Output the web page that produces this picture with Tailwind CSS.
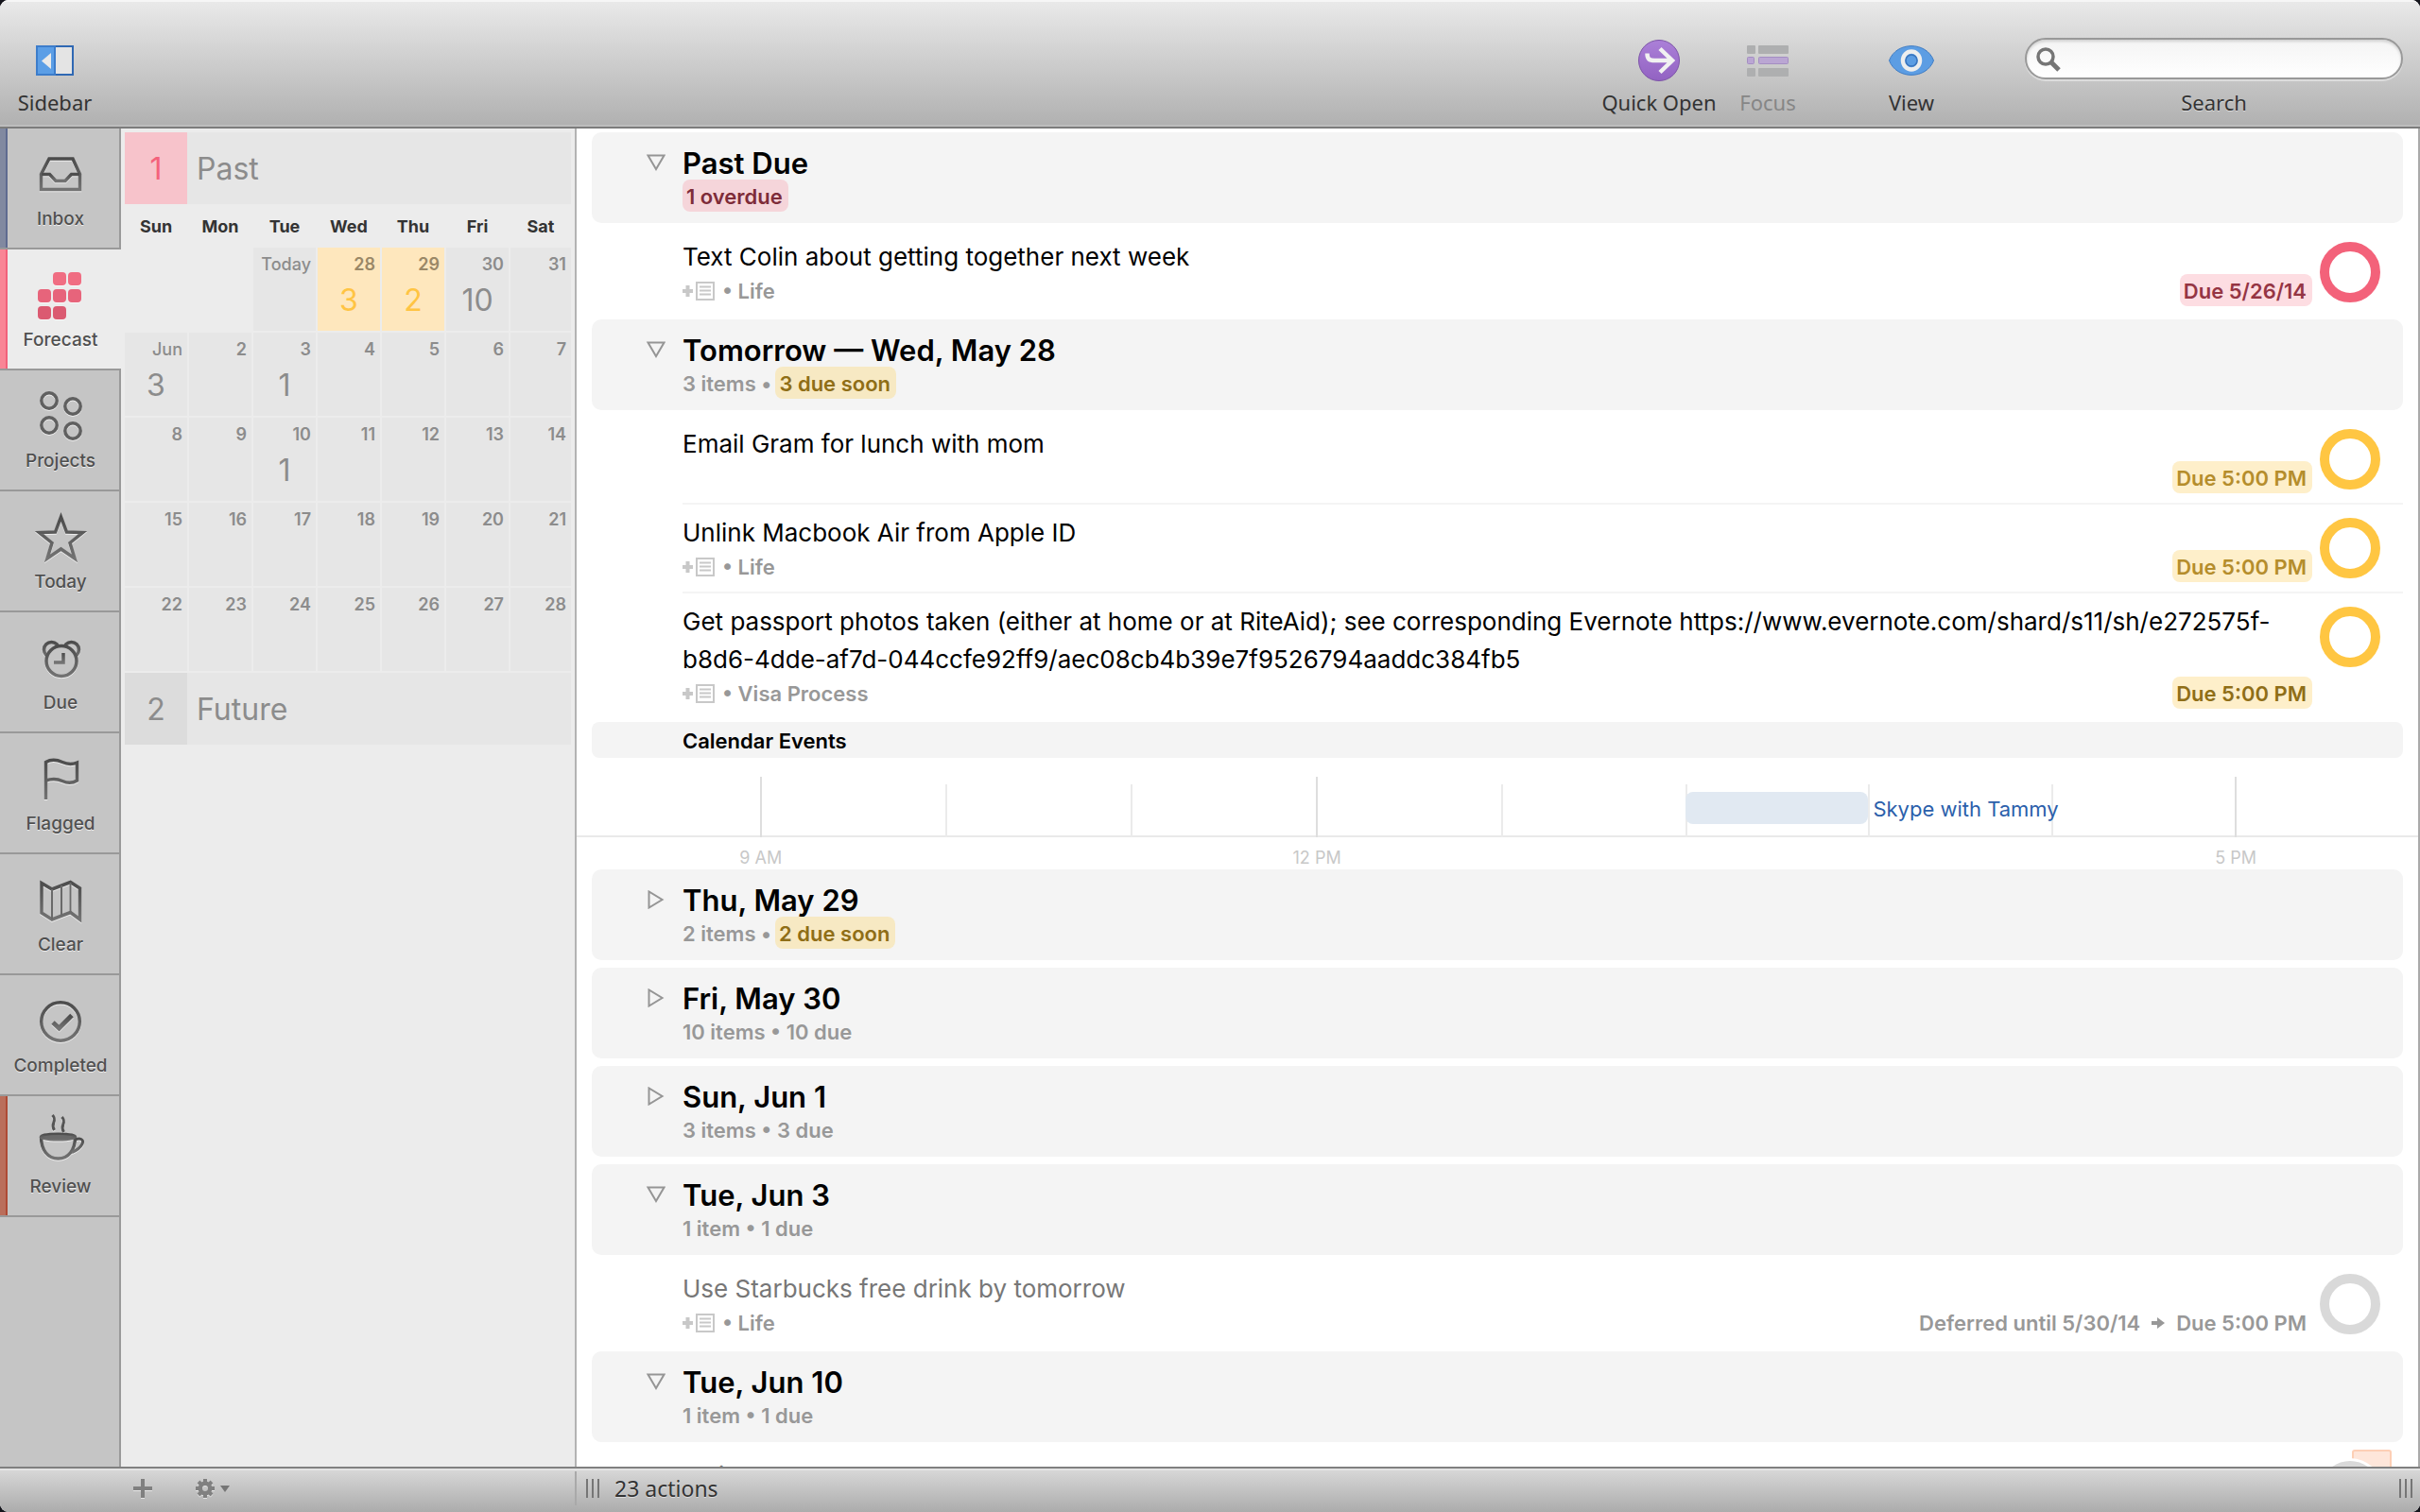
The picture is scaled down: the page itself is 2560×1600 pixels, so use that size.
<!DOCTYPE html>
<html lang="en">
<head>
<meta charset="utf-8">
<title>Forecast</title>
<script src="https://cdn.jsdelivr.net/npm/@tailwindcss/browser@4"></script>
</head>
<body class="bg-[#15151c] font-['Inter','Noto_Sans',sans-serif] text-black">
<svg class="absolute size-0" aria-hidden="true">
  <symbol id="note" viewBox="0 0 34 20"><path d="M0 10h11M5.500 4v12" stroke="#c8c8c8" stroke-width="4" fill="none"/><path d="M15 1h18v18H15z" stroke="#c8c8c8" stroke-width="2" fill="none"/><path d="M18 5.500h12M18 9.500h12M18 13.500h12" stroke="#c8c8c8" stroke-width="2"/></symbol>
  <symbol id="open" viewBox="0 0 22 20"><path d="M3.500 2.500h17L12 17z" stroke="#959595" stroke-width="2" fill="none"/></symbol>
  <symbol id="closed" viewBox="0 0 22 20"><path d="M4.500 1.500v17l14-8.500z" stroke="#959595" stroke-width="2" fill="none"/></symbol>
  <linearGradient id="ink" x1="0" y1="0" x2="0" y2="1"><stop offset="0" stop-color="#4c4c4c"/><stop offset="1" stop-color="#737373"/></linearGradient>
</svg>

<div class="flex h-screen flex-col overflow-hidden rounded-[9px] bg-white">
  <header class="flex h-[136px] shrink-0 border-b-2 border-[#7c7c7c] bg-linear-to-b from-[#eaeaea] to-[#b0b0b0] px-[18px] pt-[38px] font-['Noto_Sans','Open_Sans',sans-serif] text-[22px] leading-8 text-[#333] shadow-[inset_0_2px_0_#f6f6f6,inset_0_-2px_0_#bdbdbd] [text-shadow:0_1px_0_rgba(255,255,255,0.5)]">
    <button type="button" class="flex w-20 flex-col items-center">
      <span class="flex h-[52px] items-center"><svg width="40" height="32" viewBox="0 0 40 32"><path d="M1 1h38v30H1z" fill="#e4e4e4" stroke="#2f68b3" stroke-width="2"/><path d="M1 1h19v30H1z" fill="#5b9ee6" stroke="#3d7dcb" stroke-width="2"/><path d="M16 8v17L6 16.500z" fill="#e9e9e9"/></svg></span>
      <span class="mt-[2px] whitespace-nowrap">Sidebar</span>
    </button>
    <div class="ml-auto flex">
      <button type="button" class="flex w-[126px] flex-col items-center">
        <span class="flex h-[52px] items-center"><svg width="44" height="44" viewBox="0 0 44 44"><defs><linearGradient id="qo" x1="0" y1="0" x2="0" y2="1"><stop offset="0" stop-color="#ab80d8"/><stop offset="1" stop-color="#9262c2"/></linearGradient></defs><circle cx="22" cy="22" r="21.500" fill="url(#qo)" stroke="#7d55a8"/><path d="M9.500 14.500c0 6 2 7.500 8 7.500H36M23 9.500L36 22 23 34.500" fill="none" stroke="#f1f1f1" stroke-width="4.500"/></svg></span>
        <span class="mt-[2px] whitespace-nowrap">Quick Open</span>
      </button>
      <button type="button" disabled class="ml-[22px] flex w-[60px] flex-col items-center text-[#868686]">
        <span class="flex h-[52px] items-center"><svg width="46" height="34" viewBox="0 0 46 34"><g fill="#aeafb0"><rect x="1" y="1" width="9" height="9" rx="1"/><rect x="13" y="1" width="32" height="9" rx="1"/><rect x="1" y="25" width="9" height="9" rx="1"/><rect x="13" y="25" width="32" height="9" rx="1"/></g><g fill="#baa6d3" stroke="#a48ec2"><rect x="1.500" y="13.500" width="7" height="7" rx="1"/><rect x="13.500" y="13.500" width="31" height="7" rx="1"/></g></svg></span>
        <span class="mt-[2px] whitespace-nowrap">Focus</span>
      </button>
      <button type="button" class="ml-24 flex w-[52px] flex-col items-center">
        <span class="flex h-[52px] items-center"><svg width="48" height="32" viewBox="0 0 48 32"><path d="M.5 16C8-4.500 40-4.500 47.500 16 40 36.500 8 36.500.5 16z" fill="#5c9de3" stroke="#3f7cc4"/><ellipse cx="24" cy="16" rx="9" ry="9.500" fill="#5c9de3" stroke="#eee" stroke-width="4.500"/><circle cx="24" cy="16" r="6" fill="none" stroke="#3b75bd" stroke-width="1.500"/></svg></span>
        <span class="mt-[2px] whitespace-nowrap">View</span>
      </button>
      <div class="relative ml-[94px] flex w-[400px] flex-col items-center">
        <div class="flex h-[52px] w-full items-start pt-[2px]">
          <input id="search" type="search" class="h-11 w-full rounded-full border-2 border-[#999] bg-linear-to-b from-[#f4f4f4] to-white pl-12 pr-5 shadow-[inset_0_2px_3px_rgba(0,0,0,0.15),0_2px_0_rgba(255,255,255,0.4)] outline-none">
        </div>
        <svg class="pointer-events-none absolute left-3 top-3" width="27" height="27" viewBox="0 0 27 27"><circle cx="10" cy="10" r="8" fill="none" stroke="#757575" stroke-width="3.500"/><path d="M15.500 15.500l8.500 8.500" stroke="#757575" stroke-width="5"/></svg>
        <label for="search" class="mt-[2px]">Search</label>
      </div>
    </div>
  </header>

  <div class="flex min-h-0 flex-1">
    <nav class="flex w-32 shrink-0 flex-col border-r-2 border-[#999] bg-[#c5c5c5] text-[19px] font-medium leading-6 text-[#505050] [&>button]:flex [&>button]:h-32 [&>button]:w-32 [&>button]:shrink-0 [&>button]:flex-col [&>button]:items-center [&>button]:border-b-2 [&>button]:border-[#999] [&>button]:pt-[22px] [&>button]:[text-shadow:0_1px_0_rgba(255,255,255,0.7)] [&_span]:mt-[6px] [&_svg]:shrink-0 [&_svg]:overflow-visible [&_svg]:drop-shadow-[0_1px_0_rgba(255,255,255,0.7)]">
      <button type="button" class="border-r-2 pl-[2px] shadow-[inset_6px_0_0_#8189a0,inset_8px_0_0_#5f6b90]">
        <svg width="56" height="56" viewBox="0 0 56 56" fill="none" stroke="url(#ink)" stroke-width="3.500"><path d="M16 10h25l7.500 16.500v16h-41v-16z"/><path d="M8 26.500h8.500l6.500 7h10l6.500-7H48"/></svg>
        <span>Inbox</span>
      </button>
      <button type="button" aria-current="page" class="bg-[#ececec] shadow-[inset_6px_0_0_#f98595,inset_8px_0_0_#f1617a]">
        <svg width="56" height="56" viewBox="0 0 56 56"><g fill="#f06d82"><rect x="20" y="2" width="14" height="14" rx="4"/><rect x="36" y="2" width="14" height="14" rx="4"/></g><g fill="#e7647b"><rect x="4" y="20" width="14" height="14" rx="4"/><rect x="20" y="20" width="14" height="14" rx="4"/><rect x="36" y="20" width="14" height="14" rx="4"/></g><g fill="#db5a71"><rect x="4" y="38" width="14" height="14" rx="4"/><rect x="20" y="38" width="14" height="14" rx="4"/></g></svg>
        <span>Forecast</span>
      </button>
      <button type="button" class="border-r-2 pl-[2px]">
        <svg width="56" height="56" viewBox="0 0 56 56" fill="none" stroke="#606060" stroke-width="3.500"><circle cx="16" cy="10" r="8.200"/><circle cx="41" cy="16" r="8.200"/><circle cx="16" cy="36" r="8.200"/><circle cx="41" cy="42" r="8.200"/></svg>
        <span>Projects</span>
      </button>
      <button type="button" class="border-r-2 pl-[2px]">
        <svg width="56" height="56" viewBox="0 0 56 56" fill="none" stroke="url(#ink)" stroke-width="3.500"><path d="M28.500 5l6 16 17 .5-13.500 11 5 16.500-14.500-10L14 49l5-16.500L5.500 21.500l17-.5z"/></svg>
        <span>Today</span>
      </button>
      <button type="button" class="border-r-2 pl-[2px]">
        <svg width="56" height="56" viewBox="0 0 56 56" fill="#c5c5c5" stroke="url(#ink)" stroke-width="3.500"><circle cx="18.500" cy="17.500" r="8"/><circle cx="39.500" cy="17.500" r="8"/><circle cx="29" cy="29.500" r="16"/><path d="M31 21v10H21" fill="none"/></svg>
        <span>Due</span>
      </button>
      <button type="button" class="border-r-2 pl-[2px]">
        <svg width="56" height="56" viewBox="0 0 56 56" fill="none" stroke="url(#ink)" stroke-width="3.500"><path d="M12.500 48V8.500c7-4 13-2 17.500 0s10.500 2.500 15.500.5v19c-5 3-11 2.500-15.500.5s-10-3-17.500-.5"/></svg>
        <span>Flagged</span>
      </button>
      <button type="button" class="border-r-2 pl-[2px]">
        <svg width="56" height="56" viewBox="0 0 56 56" fill="none" stroke="url(#ink)" stroke-width="3.500"><path d="M8 8.500l11 6.500 19.500-7.500L48.500 14v33l-10-7.500L19 47 8 40z"/><path d="M19 15v32M29 11v32M38.500 8v31" stroke="#6a6a6a" stroke-width="2"/></svg>
        <span>Clear</span>
      </button>
      <button type="button" class="border-r-2 pl-[2px]">
        <svg width="56" height="56" viewBox="0 0 56 56" fill="none" stroke="url(#ink)" stroke-width="3.500"><circle cx="28" cy="27" r="20.300"/><path d="M20 28l6.500 6L40 20.500" stroke-width="5"/></svg>
        <span>Completed</span>
      </button>
      <button type="button" class="border-r-2 pl-[2px] shadow-[inset_6px_0_0_#ba6e5b,inset_8px_0_0_#ae4a35]">
        <svg width="56" height="56" viewBox="0 0 56 56" fill="none" stroke="url(#ink)" stroke-width="3.500"><path d="M7.500 21c0 14 7 23 18 23s18-9 18-23"/><ellipse cx="25.500" cy="21" rx="18.500" ry="3.200" fill="#696969" stroke-width="2.500"/><path d="M43 24.500c5-3 10.500-1 8 4s-6 7-11 9" stroke-width="3"/><path d="M19.500-2c6 7-3 8 2 16M29.500 0c6 7-3 8 2 16" stroke="#555" stroke-width="3"/></svg>
        <span>Review</span>
      </button>
    </nav>

    <aside class="flex w-[482px] shrink-0 flex-col border-r-2 border-[#b3b3b3] bg-[#ececec] pl-[2px] pr-[2px] pt-1 text-[#8c8c8c]">
      <a href="#past" class="mx-[2px] flex h-[76px] bg-[#e6e6e6] text-[32px] leading-[78px]">
        <span class="w-[66px] bg-[#f7c3cb] text-center text-[#f4627b]">1</span><span class="pl-[10px]">Past</span>
      </a>
      <table class="w-full table-fixed border-separate border-spacing-[2px] text-[18px] font-semibold [&_i]:block [&_i]:text-center [&_i]:text-[32px] [&_i]:font-normal [&_i]:not-italic [&_i]:leading-10 [&_td]:h-[88px] [&_td]:bg-[#e6e6e6] [&_td]:p-0 [&_td]:align-top [&_td]:leading-9 [&_time]:block [&_time]:pr-[5px] [&_time]:text-right">
        <colgroup><col span="6" class="w-[66px]"><col></colgroup>
        <thead><tr class="h-[42px] text-[#333]"><th>Sun</th><th>Mon</th><th>Tue</th><th>Wed</th><th>Thu</th><th>Fri</th><th>Sat</th></tr></thead>
        <tbody>
          <tr><td class="bg-transparent!"></td><td class="bg-transparent!"></td><td><time class="font-medium">Today</time></td><td class="bg-[#fee7bd]! text-[#9a8867]"><time>28</time><i class="text-[#ffc443]">3</i></td><td class="bg-[#fee7bd]! text-[#9a8867]"><time>29</time><i class="text-[#ffc443]">2</i></td><td><time>30</time><i>10</i></td><td><time>31</time></td></tr>
          <tr><td><time class="font-medium">Jun</time><i>3</i></td><td><time>2</time></td><td><time>3</time><i>1</i></td><td><time>4</time></td><td><time>5</time></td><td><time>6</time></td><td><time>7</time></td></tr>
          <tr><td><time>8</time></td><td><time>9</time></td><td><time>10</time><i>1</i></td><td><time>11</time></td><td><time>12</time></td><td><time>13</time></td><td><time>14</time></td></tr>
          <tr><td><time>15</time></td><td><time>16</time></td><td><time>17</time></td><td><time>18</time></td><td><time>19</time></td><td><time>20</time></td><td><time>21</time></td></tr>
          <tr><td><time>22</time></td><td><time>23</time></td><td><time>24</time></td><td><time>25</time></td><td><time>26</time></td><td><time>27</time></td><td><time>28</time></td></tr>
        </tbody>
      </table>
      <a href="#future" class="mx-[2px] flex h-[76px] bg-[#e6e6e6] text-[32px] leading-[78px]">
        <span class="h-[76px] w-[66px] bg-[#dcdcdc] text-center">2</span><span class="pl-[10px]">Future</span>
      </a>
    </aside>

    <main class="min-w-0 flex-1 overflow-hidden border-r-2 border-[#aaa] bg-white pt-1 text-[22px] font-semibold [&_h2]:pt-1 [&_h2]:text-[31px] [&_h2]:font-semibold [&_h2]:leading-[34px] [&_h3]:pt-[2px] [&_h3]:text-[26px] [&_h3]:font-normal [&_h3]:leading-10 [&_header]:mx-4 [&_header]:flex [&_header]:rounded-[10px] [&_header]:bg-[#f4f4f4] [&_header]:py-3 [&_header]:pl-14 [&_header_button]:mr-4 [&_header_button]:h-10 [&_header_button]:w-6 [&_p]:flex [&_p]:items-end [&_p]:leading-8 [&_p]:text-[#989898] [&_header_p]:h-[34px] [&_p>svg]:self-center [&_ul]:pb-1 [&_ul]:pl-28 [&_ul]:pr-4 [&_ul]:pt-[6px] [&_li]:flex [&_li]:pt-2 [&_li]:pb-[10px] [&_li>div]:min-w-0 [&_li>div]:flex-1 [&_li_p]:h-8 [&_mark]:rounded-lg [&_mark]:pl-1 [&_mark]:pr-[6px] [&_mark]:pt-[2px] [&_input]:mt-[6px] [&_input]:mr-6 [&_input]:ml-2 [&_input]:size-16 [&_input]:shrink-0 [&_input]:appearance-none [&_input]:rounded-full [&_input]:border-[10px]">
      <section id="past">
        <header><button type="button" aria-label="Collapse Past Due"><svg width="22" height="20"><use href="#open"/></svg></button>
          <div><h2>Past Due</h2><p><mark class="bg-[#f5d5da] text-[#7e2c39]">1 overdue</mark></p></div></header>
        <ul>
          <li><div><h3>Text Colin about getting together next week</h3><p><svg width="34" height="20"><use href="#note"/></svg><span class="pl-2">• Life</span><mark class="ml-auto bg-[#fddde2] text-[#953544]">Due 5/26/14</mark></p></div><input type="checkbox" aria-label="Text Colin about getting together next week" class="border-[#f3627a]"></li>
        </ul>
      </section>
      <section>
        <header><button type="button" aria-label="Collapse Wed, May 28"><svg width="22" height="20"><use href="#open"/></svg></button>
          <div><h2>Tomorrow — Wed, May 28</h2><p>3 items •<mark class="ml-1 bg-[#f7e9c3] text-[#8f6e17]">3 due soon</mark></p></div></header>
        <ul>
          <li class="border-b-2 border-[#f4f4f4]"><div><h3>Email Gram for lunch with mom</h3><p><mark class="ml-auto bg-[#feefca] text-[#b58d2c]">Due 5:00 PM</mark></p></div><input type="checkbox" aria-label="Email Gram for lunch with mom" class="border-[#ffc642]"></li>
          <li class="border-b-2 border-[#f4f4f4]"><div><h3>Unlink Macbook Air from Apple ID</h3><p><svg width="34" height="20"><use href="#note"/></svg><span class="pl-2">• Life</span><mark class="ml-auto bg-[#feefca] text-[#b58d2c]">Due 5:00 PM</mark></p></div><input type="checkbox" aria-label="Unlink Macbook Air from Apple ID" class="border-[#ffc642]"></li>
          <li><div><h3 class="pr-8">Get passport photos taken (either at home or at RiteAid); see corresponding Evernote https://www.evernote.com/shard/s11/sh/e272575f-b8d6-4dde-af7d-044ccfe92ff9/aec08cb4b39e7f9526794aaddc384fb5</h3><p><svg width="34" height="20"><use href="#note"/></svg><span class="pl-2">• Visa Process</span><mark class="ml-auto bg-[#feefca] text-[#8f6e17]">Due 5:00 PM</mark></p></div><input type="checkbox" aria-label="Get passport photos taken" class="border-[#ffc642]"></li>
        </ul>
        <h4 class="mx-4 h-[38px] rounded-lg bg-[#f4f4f4] pl-24 leading-10">Calendar Events</h4>
        <div class="relative h-[118px] font-normal">
          <div class="absolute inset-x-0 top-5 h-16 border-b-2 border-[#e9e9e9]">
            <span class="absolute top-0 h-16 w-[2px] bg-[#dedede]" style="left:9.95%"></span>
            <span class="absolute top-2 h-14 w-[2px] bg-[#ebebeb]" style="left:20%"></span>
            <span class="absolute top-2 h-14 w-[2px] bg-[#ebebeb]" style="left:30.1%"></span>
            <span class="absolute top-0 h-16 w-[2px] bg-[#dedede]" style="left:40.15%"></span>
            <span class="absolute top-2 h-14 w-[2px] bg-[#ebebeb]" style="left:50.2%"></span>
            <span class="absolute top-2 h-14 w-[2px] bg-[#ebebeb]" style="left:60.2%"></span>
            <span class="absolute top-2 h-14 w-[2px] bg-[#ebebeb]" style="left:70.1%"></span>
            <span class="absolute top-2 h-14 w-[2px] bg-[#ebebeb]" style="left:80.1%"></span>
            <span class="absolute top-0 h-16 w-[2px] bg-[#dedede]" style="left:90.05%"></span>
            <span class="absolute top-4 h-[34px] rounded-lg bg-[#e1e9f2]" style="left:60.2%;width:9.9%"></span>
            <a href="#" class="absolute top-4 whitespace-nowrap leading-9 text-[#2b5fab]" style="left:70.4%">Skype with Tammy</a>
          </div>
          <div class="absolute inset-x-0 bottom-0 h-[26px] text-[18px] leading-7 text-[#c8c8c8]">
            <span class="absolute -translate-x-1/2" style="left:10%">9 AM</span>
            <span class="absolute -translate-x-1/2" style="left:40.2%">12 PM</span>
            <span class="absolute -translate-x-1/2" style="left:90.1%">5 PM</span>
          </div>
        </div>
      </section>
      <section class="flex flex-col gap-2 pb-2">
        <header><button type="button" aria-label="Expand Thu, May 29"><svg width="22" height="20"><use href="#closed"/></svg></button>
          <div><h2>Thu, May 29</h2><p>2 items •<mark class="ml-1 bg-[#f7e9c3] text-[#8f6e17]">2 due soon</mark></p></div></header>
        <header><button type="button" aria-label="Expand Fri, May 30"><svg width="22" height="20"><use href="#closed"/></svg></button>
          <div><h2>Fri, May 30</h2><p>10 items • 10 due</p></div></header>
        <header><button type="button" aria-label="Expand Sun, Jun 1"><svg width="22" height="20"><use href="#closed"/></svg></button>
          <div><h2>Sun, Jun 1</h2><p>3 items • 3 due</p></div></header>
      </section>
      <section>
        <header><button type="button" aria-label="Collapse Tue, Jun 3"><svg width="22" height="20"><use href="#open"/></svg></button>
          <div><h2>Tue, Jun 3</h2><p>1 item • 1 due</p></div></header>
        <ul>
          <li><div><h3 class="text-[#777]">Use Starbucks free drink by tomorrow</h3><p><svg width="34" height="20"><use href="#note"/></svg><span class="pl-2">• Life</span><span class="ml-auto flex items-center gap-3 pr-[6px]">Deferred until 5/30/14 <svg width="14" height="12" viewBox="0 0 14 12"><path d="M0 6h8" stroke="#989898" stroke-width="4"/><path d="M6 0l8 6-8 6z" fill="#989898"/></svg> Due 5:00 PM</span></p></div><input type="checkbox" aria-label="Use Starbucks free drink by tomorrow" class="border-[#d9d9d9]"></li>
        </ul>
      </section>
      <section>
        <header><button type="button" aria-label="Collapse Tue, Jun 10"><svg width="22" height="20"><use href="#open"/></svg></button>
          <div><h2>Tue, Jun 10</h2><p>1 item • 1 due</p></div></header>
        <ul>
          <li class="relative"><div><h3 class="text-[#777]">Mail Nana’s “all done”</h3></div><span class="absolute right-3 top-[2px] size-[42px] rounded-[3px] border-2 border-[#fdcfb5] bg-[#fee6da]"></span><input type="checkbox" aria-label="Flagged action" class="relative border-[#d9d9d9] bg-white shadow-[0_0_0_3px_white]"></li>
        </ul>
      </section>
    </main>
  </div>

  <footer class="flex h-12 shrink-0 items-center border-t-2 border-[#808080] bg-linear-to-b from-[#d9d9d9] to-[#acacac] pb-1 pr-2 font-['Noto_Sans','Open_Sans',sans-serif] text-[23px] leading-8 text-[#333] shadow-[inset_0_2px_0_#e4e4e4]">
    <div class="flex h-9 w-[610px] items-center border-r-2 border-[#a9a9a9] pl-[141px]">
      <button type="button" aria-label="Add"><svg class="drop-shadow-[0_1px_0_rgba(255,255,255,0.6)]" width="20" height="20" viewBox="0 0 20 20"><path d="M0 10h20M10 0v20" stroke="#808080" stroke-width="4"/></svg></button>
      <button type="button" aria-label="Actions" class="ml-[46px] flex items-center gap-[6px]"><svg class="drop-shadow-[0_1px_0_rgba(255,255,255,0.6)]" width="20" height="20" viewBox="0 0 20 20"><g stroke="#808080" fill="none"><circle cx="10" cy="10" r="5.200" stroke-width="4.500"/><path d="M10 0v4M10 16v4M0 10h4M16 10h4M3 3l3 3M14 14l3 3M3 17l3-3M14 6l3-3" stroke-width="4"/></g></svg><svg width="10" height="7" viewBox="0 0 10 7"><path d="M0 0h10L5 7z" fill="#757575"/></svg></button>
    </div>
    <span class="ml-[10px] flex gap-1"><span class="h-5 w-[2px] bg-[#767676]"></span><span class="h-5 w-[2px] bg-[#767676]"></span><span class="h-5 w-[2px] bg-[#767676]"></span></span>
    <span class="ml-4 [text-shadow:0_1px_0_rgba(255,255,255,0.5)]">23 actions</span>
    <span class="ml-auto flex gap-1"><span class="h-5 w-[2px] bg-[#767676]"></span><span class="h-5 w-[2px] bg-[#767676]"></span><span class="h-5 w-[2px] bg-[#767676]"></span></span>
  </footer>
</div>
</body>
</html>
